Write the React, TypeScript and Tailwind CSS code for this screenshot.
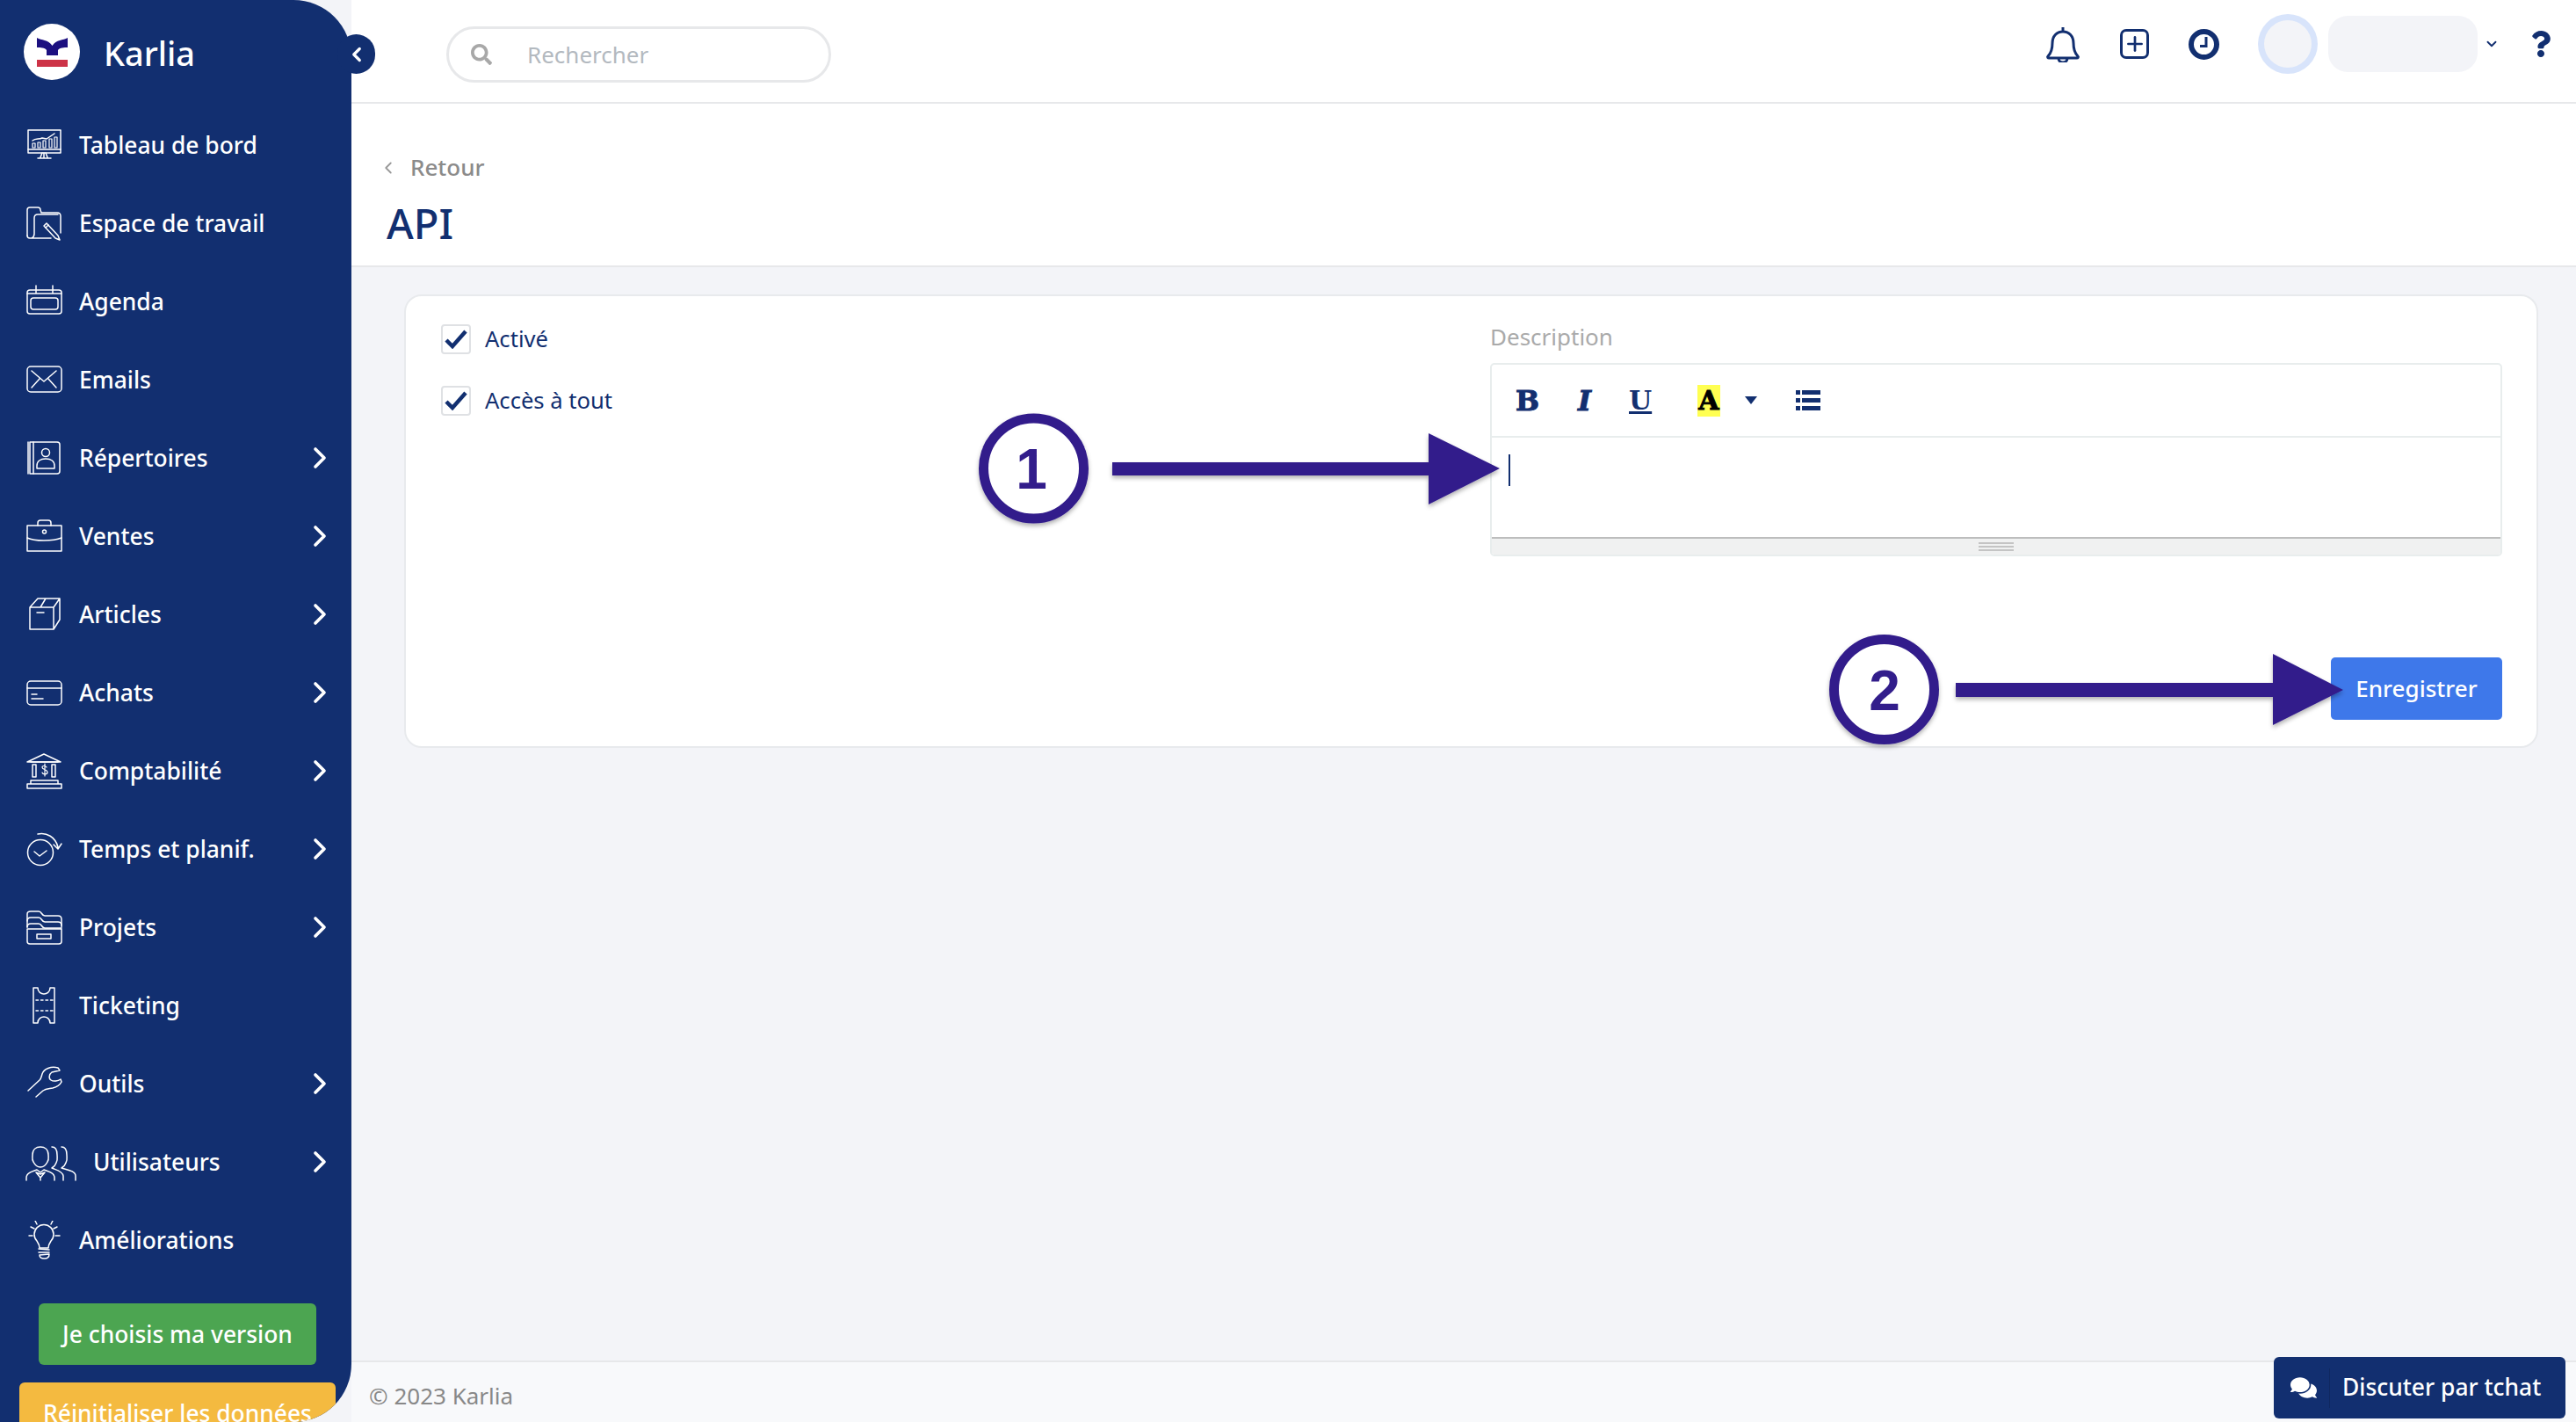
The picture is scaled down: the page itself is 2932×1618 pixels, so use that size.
import { ChevronLeft, ChevronRight, ChevronDown, Plus } from "lucide-react";
import { FaComments, FaQuestion, FaSearch } from "react-icons/fa";
import type { ReactNode } from "react";

const Line = ({ children, w = 44 }: { children: ReactNode; w?: number }) => (
  <svg
    width={w}
    height="44"
    viewBox={`0 0 ${w} 44`}
    fill="none"
    stroke="white"
    strokeWidth="1.5"
    strokeLinecap="round"
    strokeLinejoin="round"
    className="shrink-0"
  >
    {children}
  </svg>
);

const icons: Record<string, ReactNode> = {
  dashboard: (
    <Line>
      <rect x="4" y="5" width="37" height="26" />
      <path d="M4 27h37M22 31v5M18 36l2-5M26 36l-2-5M15 37h15" />
      <path d="M9 17c4-3 7-1 11-3l5 1 9-6" />
      <path d="M9 20h3v5H9zM15 19h3v6h-3zM21 17h3v8h-3zM28 15h3v10h-3zM34 13h3v12h-3z" strokeWidth="1.2" />
    </Line>
  ),
  workspace: (
    <Line>
      <path d="M3 36V7c0-2 1-3 3-3h9c2 0 3 1 3 3l1 3h18c2 0 4 1 4 4v19" />
      <path d="M3 36c0 2 1 3 3 3h24M8 39c2-1 3-2 3-5V16c0-3 2-4 4-4h23" />
      <path d="M22 25l3-3 13 14 2 5-5-2z" />
      <path d="M24 27l3-3" />
    </Line>
  ),
  agenda: (
    <Line>
      <rect x="3" y="9" width="39" height="27" rx="3" />
      <path d="M13 4v9M32 4v9M3 13h39" />
      <rect x="7" y="18" width="31" height="13" rx="3" />
    </Line>
  ),
  mail: (
    <Line>
      <rect x="3" y="7" width="39" height="29" rx="4" />
      <path d="M8 12l14 12 14-12M8 31l9-10M36 31l-9-10" />
    </Line>
  ),
  book: (
    <Line>
      <path d="M6 4h31c2 0 3 1 3 3v30c0 2-1 3-3 3H6z" />
      <path d="M4 4v36M10 4v36" />
      <circle cx="24" cy="16" r="4.5" />
      <path d="M14 34v-3c0-5 4-8 10-8s10 3 10 8v3z" />
    </Line>
  ),
  briefcase: (
    <Line>
      <rect x="3" y="10" width="39" height="29" />
      <path d="M15 10V7c0-2 1-3 3-3h9c2 0 3 1 3 3v3" />
      <path d="M3 24c6 3 12 3 19 3s13 0 20-3" />
      <circle cx="22.500" cy="17" r="2" />
    </Line>
  ),
  box: (
    <Line>
      <path d="M6 14h27v25H6zM6 14l9-10h25l-7 10zM33 39l7-11V4M18 14l6-10" />
      <path d="M14 20h8" />
    </Line>
  ),
  card: (
    <Line>
      <rect x="3" y="9" width="39" height="27" rx="4" />
      <path d="M3 17h39M8 24h6M8 29h13" />
    </Line>
  ),
  bank: (
    <Line>
      <path d="M3 12L22 3l19 9z" />
      <path d="M7 12h31" />
      <rect x="9" y="15" width="4" height="14" />
      <rect x="31" y="15" width="4" height="14" />
      <path d="M25 18c-1-2-5-2-5 0 0 3 6 2 6 6 0 2-5 3-6 0M23 14v14" strokeWidth="1.2" />
      <path d="M7 33h31v4H7zM3 37h39v5H3z" />
    </Line>
  ),
  time: (
    <Line>
      <circle cx="18" cy="26" r="14.500" />
      <path d="M11 25l6 5 8-6" />
      <path d="M15 5c10-2 20 3 23 15M33 17l5 5 4-6" />
    </Line>
  ),
  projects: (
    <Line>
      <path d="M3 22V7c0-2 1-3 4-3h9c4 0 3 5 7 5h15c3 0 4 2 4 4v9" />
      <path d="M3 15c0-3 1-4 4-4h9c4 0 3 5 7 5h15c3 0 4 2 4 4" />
      <path d="M3 24h39v14c0 2-1 3-3 3H6c-2 0-3-1-3-3z" />
      <path d="M3 22c0-3 1-4 4-4h9c4 0 3 5 7 5h19" />
      <rect x="14" y="30" width="16" height="5" />
    </Line>
  ),
  ticket: (
    <Line>
      <path d="M10 2h5c0 5 4 7 7 7s7-2 7-7h5v40h-5c0-5-4-7-7-7s-7 2-7 7h-5z" />
      <path d="M13 16h19M13 28h19" strokeDasharray="2.500 3" />
    </Line>
  ),
  wrench: (
    <Line>
      <path d="M4 30l13-12c2-2 2-4 3-7 2-6 10-9 18-7l2 3-9 2c-3 2-4 7-1 9 3 2 8 1 11-1l1 3c-2 4-6 6-10 7-5 1-8 1-11 3l-8 7" />
    </Line>
  ),
  users: (
    <Line w={60}>
      <path d="M9 14c0-6 4-9 9-9s9 3 9 9c0 3 1 5-1 8-2 4-5 6-8 6s-6-2-8-6c-2-3-1-5-1-8z" />
      <path d="M2 43v-3c0-5 6-7 12-9l4 3 4-3c6 2 12 4 12 9v3" />
      <path d="M13 34l5 6 5-6-5 2zM18 40v3" />
      <path d="M31 5c5 0 6 5 6 9 0 3 1 6-1 9-1 3-3 5-5 6 4 2 12 3 13 9v5" />
      <path d="M42 5c5 0 6 5 6 9 0 3 1 6-1 9-1 3-3 5-5 6 6 2 16 3 16 9v5" />
    </Line>
  ),
  bulb: (
    <Line>
      <path d="M14 23a11 11 0 1 1 16 0c-2 3-3 5-3 8H17c0-3-1-5-3-8z" />
      <path d="M16 32l12 1M16 36h12M17 39l11-1c0 4-3 5-5.500 5S17 42 17 39z" />
      <path d="M5 17h4M35 17h5M7 7l4 2M37 7l-4 2M12 0l2 4M32 0l-2 4" />
    </Line>
  ),
};

const menu = [
  { label: "Tableau de bord", icon: "dashboard" },
  { label: "Espace de travail", icon: "workspace" },
  { label: "Agenda", icon: "agenda" },
  { label: "Emails", icon: "mail" },
  { label: "Répertoires", icon: "book", sub: true },
  { label: "Ventes", icon: "briefcase", sub: true },
  { label: "Articles", icon: "box", sub: true },
  { label: "Achats", icon: "card", sub: true },
  { label: "Comptabilité", icon: "bank", sub: true },
  { label: "Temps et planif.", icon: "time", sub: true },
  { label: "Projets", icon: "projects", sub: true },
  { label: "Ticketing", icon: "ticket" },
  { label: "Outils", icon: "wrench", sub: true },
  { label: "Utilisateurs", icon: "users", sub: true },
  { label: "Améliorations", icon: "bulb" },
];

const Sidebar = () => (
  <aside className="relative flex h-full w-[400px] shrink-0 flex-col overflow-hidden rounded-r-[66px] bg-[#122f70] text-white">
    <div className="flex h-[120px] shrink-0 items-start pl-[27px] pt-[27px]">
      <svg width="64" height="64" viewBox="0 0 64 64" className="shrink-0">
        <circle cx="32" cy="32" r="32" fill="white" />
        <path
          d="M15 16c5 3 13 2 17.500 9C37 18 45 19 50 16v11c-4 0-9 0-11 3v6H26v-6c-2-3-7-3-11-3z"
          fill="#1c1080"
        />
        <rect x="15" y="41" width="35" height="8" fill="#cd3347" />
      </svg>
      <span className="ml-[27px] mt-[8px] text-[38px] leading-[50px] font-medium">Karlia</span>
    </div>
    <nav className="flex flex-col">
      {menu.map((item) => (
        <div key={item.label} className="flex h-[89px] items-center pl-[28px] pr-[16px]">
          {icons[item.icon]}
          <span className="ml-[18px] pt-[2px] text-[26.4px] font-medium">{item.label}</span>
          {item.sub && <ChevronRight size={40} strokeWidth={2.2} className="ml-auto" />}
        </div>
      ))}
    </nav>
    <button className="ml-[44px] mt-[28px] h-[70px] w-[316px] shrink-0 rounded-[6px] bg-[#4ca551] pt-[2px] text-[26.4px] font-medium">
      Je choisis ma version
    </button>
    <button className="ml-[22px] mt-[20px] h-[70px] w-[360px] shrink-0 rounded-[6px] bg-[#f4ba40] pt-[2px] text-[26.4px] font-medium">
      Réinitialiser les données
    </button>
  </aside>
);

const Header = () => (
  <header className="flex h-[118px] shrink-0 items-center border-b-2 border-[#e7e8ea] bg-white pl-[108px] pr-[25px]">
    <div className="mt-[8px] flex h-[64px] w-[438px] items-center rounded-full border-[3px] border-[#e7e8ea] pl-[25px]">
      <FaSearch size={24} className="text-[#a8a8a8]" />
      <span className="ml-[40px] text-[26px] text-[#b3b9bf]">Rechercher</span>
    </div>
    <div className="mb-[16px] ml-auto flex items-center">
      <svg width="40" height="42" viewBox="0 0 40 42" fill="none" stroke="#122f70" strokeWidth="3" strokeLinejoin="round">
        <path d="M20 2v4M3 35c4-4 5-9 5-15 0-8 5-13 12-13s12 5 12 13c0 6 1 11 5 15 1 1 0 2-1 2H4c-1 0-2-1-1-2z" />
        <path d="M15 37c0 3 2 5 5 5s5-2 5-5" />
      </svg>
      <div className="ml-[45px] flex h-[34px] w-[33px] items-center justify-center rounded-[7px] border-[3px] border-[#122f70]">
        <Plus size={26} strokeWidth={2.500} className="text-[#122f70]" />
      </div>
      <svg className="ml-[45px]" width="35" height="35" viewBox="0 0 35 35" fill="none" stroke="#122f70">
        <circle cx="17.500" cy="17.500" r="14.500" strokeWidth="6" />
        <path d="M20 9v10.500h-7" strokeWidth="3" />
      </svg>
      <div className="ml-[44px] flex h-[68px] w-[68px] items-center justify-center rounded-full bg-[#d8e4fb]">
        <div className="h-[54px] w-[54px] rounded-full bg-[#f3f4f8]" />
      </div>
      <div className="ml-[12px] h-[64px] w-[170px] rounded-[22px] bg-[#f3f4f8]" />
      <ChevronDown size={18} strokeWidth={2.500} className="ml-[7px] text-[#122f70]" />
      <FaQuestion size={30} className="ml-[32px] text-[#122f70]" />
    </div>
  </header>
);

const Check = ({ label }: { label: string }) => (
  <label className="flex h-[34px] items-center gap-[16px] text-[25.6px] text-[#122f70]">
    <span className="flex h-[34px] w-[34px] items-center justify-center rounded-[4px] border-2 border-[#dfe1e4] bg-white">
      <svg width="26" height="22" viewBox="0 0 26 22" fill="none" stroke="#122f70" strokeWidth="4.500">
        <path d="M2 12l7 7L24 2" />
      </svg>
    </span>
    {label}
  </label>
);

const Editor = () => (
  <div className="flex h-[220px] flex-col overflow-hidden rounded-[5px] border-2 border-[#e8eded]">
    <div className="flex h-[83px] shrink-0 items-center border-b-2 border-[#e8eded] pl-[27px] text-[#122f70]">
      <span className="w-[24px] font-['DejaVu_Serif',serif] text-[32px] leading-none font-bold [-webkit-text-stroke:1px_#122f70]">B</span>
      <span className="ml-[47px] w-[18px] font-['DejaVu_Serif',serif] text-[32px] leading-none font-bold italic [-webkit-text-stroke:1px_#122f70]">I</span>
      <span className="ml-[40px] w-[25px] font-['DejaVu_Serif',serif] text-[30px] leading-none font-bold underline">U</span>
      <span className="ml-[53px] flex h-[36px] w-[26px] items-center justify-center bg-[#ffff52] font-['DejaVu_Serif',serif] text-[30px] leading-none font-bold text-black [-webkit-text-stroke:1px_#000]">
        A
      </span>
      <span className="ml-[28px] h-0 w-0 border-x-[7px] border-t-[9px] border-x-transparent border-t-[#122f70]" />
      <svg className="ml-[44px]" width="28" height="24" viewBox="0 0 28 24" fill="#122f70">
        <path d="M0 0h5v5H0zM7 0h21v5H7zM0 9h5v5H0zM7 9h21v5H7zM0 18h5v5H0zM7 18h21v5H7z" />
      </svg>
    </div>
    <div className="flex-1 pl-[19px] pt-[19px]">
      <div className="h-[36px] w-[2px] bg-[#122f70]" />
    </div>
    <div className="flex h-[20px] shrink-0 items-center justify-center border-t-2 border-[#bdbdbd] bg-[#f0f1f1]">
      <div className="flex w-[40px] flex-col gap-[2px]">
        <div className="h-[2px] bg-[#c4c4c4]" />
        <div className="h-[2px] bg-[#c4c4c4]" />
        <div className="h-[2px] bg-[#c4c4c4]" />
      </div>
    </div>
  </div>
);

// the two numbered callouts laid over the form
const Callouts = () => (
  <svg className="pointer-events-none absolute left-0 top-0" width="2932" height="1618" viewBox="0 0 2932 1618">
    <defs>
      <filter id="soft" x="-10%" y="-30%" width="120%" height="160%">
        <feDropShadow dx="0" dy="3" stdDeviation="2.500" floodColor="#000" floodOpacity="0.3" />
      </filter>
    </defs>
    <g fill="#321d8b" filter="url(#soft)">
      <circle cx="1176.500" cy="533" r="57" fill="white" stroke="#321d8b" strokeWidth="11" />
      <path d="M1266 526h360v-33l81 40-81 41v-33h-360z" />
      <circle cx="2144.500" cy="784.500" r="57" fill="white" stroke="#321d8b" strokeWidth="11" />
      <path d="M2226 777h361v-33l80 41-80 40v-32h-361z" />
    </g>
    <g fill="#321d8b" fontFamily="'Liberation Sans',sans-serif" fontWeight="700" fontSize="64" textAnchor="middle">
      <text x="1174" y="556">1</text>
      <text x="2145" y="808">2</text>
    </g>
  </svg>
);

export default function App() {
  return (
    <div className="relative flex h-screen w-full overflow-hidden bg-[#f3f4f8] font-['Noto_Sans',sans-serif]">
      <Sidebar />
      <button className="absolute left-[384px] top-[39px] flex h-[45px] w-[43px] items-center justify-center rounded-full bg-[#122f70] text-white">
        <ChevronLeft size={26} strokeWidth={3} />
      </button>
      <main className="flex min-w-0 flex-1 flex-col">
        <Header />
        <section className="h-[186px] shrink-0 border-b-2 border-[#e7e8ea] bg-white pl-[31px] pt-[53px]">
          <div className="flex items-center text-[26px] font-medium text-[#8b8b8b]">
            <ChevronLeft size={22} strokeWidth={2} className="text-[#999]" />
            <span className="ml-[14px]">Retour</span>
          </div>
          <h1 className="ml-[9px] mt-[12px] text-[47px] leading-[64px] font-medium text-[#122f70]">API</h1>
        </section>
        <div className="flex-1 pl-[60px] pr-[43px] pt-[31px]">
          <div className="relative h-[516px] rounded-[20px] border-2 border-[#e8eaed] bg-white">
            <div className="absolute left-[40px] top-[32px] flex flex-col gap-[36px]">
              <Check label="Activé" />
              <Check label="Accès à tout" />
            </div>
            <div className="ml-auto mr-[39px] w-[1152px] pt-[23px]">
              <div className="mb-[7px] text-[26px] leading-[46px] text-[#aaaaaa]">Description</div>
              <Editor />
              <div className="mt-[115px] flex justify-end">
                <button className="h-[71px] w-[195px] rounded-[5px] bg-[#3e78ea] text-[26px] font-medium text-white">
                  Enregistrer
                </button>
              </div>
            </div>
          </div>
        </div>
        <footer className="flex h-[70px] shrink-0 items-center border-t-2 border-[#e7e8ea] bg-[#f8f9fb] pl-[20px] pt-[8px] text-[26px] text-[#888]">
          © 2023 Karlia
        </footer>
      </main>
      <button className="absolute bottom-[4px] right-[12px] flex h-[70px] w-[332px] items-center rounded-[6px] bg-[#122f70] pl-[19px] text-[26.4px] font-medium text-white">
        <FaComments size={30} />
        <span className="ml-[14px] h-[45px] w-[1px] bg-[#0f2860]" />
        <span className="ml-[14px]">Discuter par tchat</span>
      </button>
      <Callouts />
    </div>
  );
}
